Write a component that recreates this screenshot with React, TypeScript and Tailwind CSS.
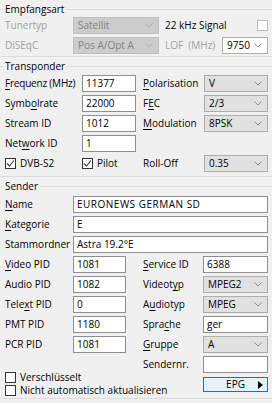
import React from "react";

const Chevron = ({ disabled }: { disabled?: boolean }) => (
  <svg width="8" height="5" viewBox="0 0 8 5" className="shrink-0">
    <path d="M0.5 0.5 L4 4 L7.5 0.5" fill="none" stroke={disabled ? "#b0b0b0" : "#8a8a8a"} strokeWidth="1" />
  </svg>
);

const Combo = ({ value, disabled, white }: { value: string; disabled?: boolean; white?: boolean }) => (
  <div
    className={
      "h-[17px] flex items-center justify-between pl-[4px] pr-[5px] border " +
      (disabled
        ? "bg-[#cccccc] border-[#bfbfbf] text-[#838383]"
        : white
        ? "bg-white border-[#adadad] text-black"
        : "bg-[#e1e1e1] border-[#adadad] text-black")
    }
  >
    <span>{value}</span>
    <Chevron disabled={disabled} />
  </div>
);

const Edit = ({ value, className }: { value?: string; className?: string }) => (
  <div className={"h-[17px] flex items-center px-[3px] bg-white border border-[#8f8f8f] text-black " + (className ?? "")}>{value}</div>
);

const Check = ({ checked, disabled }: { checked?: boolean; disabled?: boolean }) => (
  <span
    className={
      "w-[11px] h-[11px] shrink-0 border bg-white flex items-center justify-center " +
      (disabled ? "border-[#bcbcbc]" : "border-[#333333]")
    }
  >
    {checked && (
      <svg width="9" height="9" viewBox="0 0 9 9">
        <path d="M1 4.5 L3.5 7 L8 1.5" fill="none" stroke="#333333" strokeWidth="1.1" />
      </svg>
    )}
  </span>
);

const Label = ({ children, gray, className }: { children: React.ReactNode; gray?: boolean; className?: string }) => (
  <div className={"h-[17px] flex items-center whitespace-nowrap " + (gray ? "text-[#a0a0a0] " : "text-black ") + (className ?? "")}>
    {children}
  </div>
);

const U = ({ children }: { children: React.ReactNode }) => <span className="underline underline-offset-[2px]">{children}</span>;

const Header = ({ title }: { title: string }) => (
  <div className="h-[13px] flex items-center">
    <div className="w-[3px] h-px bg-[#dcdcdc]" />
    <span className="px-[2px] text-black leading-[13px]">{title}</span>
    <div className="flex-1 h-px bg-[#dcdcdc]" />
  </div>
);

export default function App() {
  return (
    <div className="w-[272px] h-[403px] overflow-hidden bg-[#f0f0f0] font-['Open_Sans',sans-serif] text-[10px] leading-[13px] select-none">
      {/* Empfangsart */}
      <div className="pt-[3px] pb-[2px] border-b border-[#dcdcdc]">
        <Header title="Empfangsart" />
        <div className="mt-px pl-[5px] pr-[4px] grid grid-cols-[68px_86px_63px_46px] gap-y-[3px]">
          <Label gray>Tunertyp</Label>
          <Combo value="Satellit" disabled />
          <Label className="pl-[6px] text-[#555555]">22 kHz Signal</Label>
          <div className="h-[17px] flex items-center justify-end">
            <Check disabled />
          </div>
          <Label gray>DiSEqC</Label>
          <Combo value="Pos A/Opt A" disabled />
          <Label gray className="pl-[6px]">LOF&nbsp;&nbsp;(MHz)</Label>
          <Combo value="9750" white />
        </div>
      </div>

      {/* Transponder */}
      <div className="pt-[3px] pb-[4px] border-b border-[#dcdcdc]">
        <Header title="Transponder" />
        <div className="mt-[2px] pl-[5px] pr-[4px] grid grid-cols-[77px_54px_68px_64px] gap-y-[3px]">
          <Label className="tracking-[-0.2px]"><U>F</U>requenz (MHz)</Label>
          <Edit value="11377" />
          <Label className="pl-[7px]"><U>P</U>olarisation</Label>
          <Combo value="V" />

          <Label>Symb<U>o</U>lrate</Label>
          <Edit value="22000" />
          <Label className="pl-[7px]">F<U>E</U>C</Label>
          <Combo value="2/3" />

          <Label>Stream ID</Label>
          <Edit value="1012" />
          <Label className="pl-[7px]"><U>M</U>odulation</Label>
          <Combo value="8PSK" />

          <Label>Net<U>w</U>ork ID</Label>
          <Edit value="1" />
          <div />
          <div />

          <Label className="gap-[4px]"><Check checked />DVB-S2</Label>
          <Label className="gap-[4px]"><Check checked />Pilot</Label>
          <Label className="pl-[7px]">Roll-Off</Label>
          <Combo value="0.35" />
        </div>
      </div>

      {/* Sender */}
      <div className="pt-[3px] pb-px border-b border-[#dcdcdc]">
        <Header title="Sender" />
        <div className="mt-[3px] pl-[5px] pr-[4px] grid grid-cols-[68px_53px_77px_65px] gap-y-[3px]">
          <Label><U>N</U>ame</Label>
          <div className="col-span-3"><Edit value="EURONEWS GERMAN SD" className="tracking-[0.5px]" /></div>

          <Label><U>K</U>ategorie</Label>
          <div className="col-span-3"><Edit value="E" /></div>

          <Label>Stammordner</Label>
          <div className="col-span-3"><Edit value="Astra 19.2°E" /></div>

          <Label><U>V</U>ideo PID</Label>
          <Edit value="1081" />
          <Label className="pl-[17px]"><U>S</U>ervice ID</Label>
          <Edit value="6388" />

          <Label>Audio PID</Label>
          <Edit value="1082" />
          <Label className="pl-[17px]">Videot<U>y</U>p</Label>
          <Combo value="MPEG2" />

          <Label>Tele<U>x</U>t PID</Label>
          <Edit value="0" />
          <Label className="pl-[17px]">A<U>u</U>diotyp</Label>
          <Combo value="MPEG" />

          <Label>PMT PID</Label>
          <Edit value="1180" />
          <Label className="pl-[17px]">Spra<U>c</U>he</Label>
          <Edit value="ger" />

          <Label>PCR PID</Label>
          <Edit value="1081" />
          <Label className="pl-[17px]"><U>G</U>ruppe</Label>
          <Combo value="A" />

          <div />
          <div />
          <Label className="pl-[17px]">Sendernr.</Label>
          <Edit />
        </div>
        <div className="mt-[-2px] pl-[5px] pr-[4px] flex justify-between items-start">
          <div className="flex flex-col">
            <div className="h-[13px] flex items-center gap-[4px] whitespace-nowrap"><Check />Verschlüsselt</div>
            <div className="h-[13px] flex items-center gap-[4px] whitespace-nowrap"><Check />Nicht automatisch aktualisieren</div>
          </div>
          <div className="mt-[6px] w-[65px] h-[15px] bg-[#e5f1fb] border border-[#0078d7] flex items-center relative">
            <span className="flex-1 text-center text-black">EPG</span>
            <svg width="5" height="8" viewBox="0 0 5 8" className="absolute right-[4px] top-[3px]">
              <path d="M0 0 L5 4 L0 8 Z" fill="#000" />
            </svg>
          </div>
        </div>
      </div>
    </div>
  );
}
